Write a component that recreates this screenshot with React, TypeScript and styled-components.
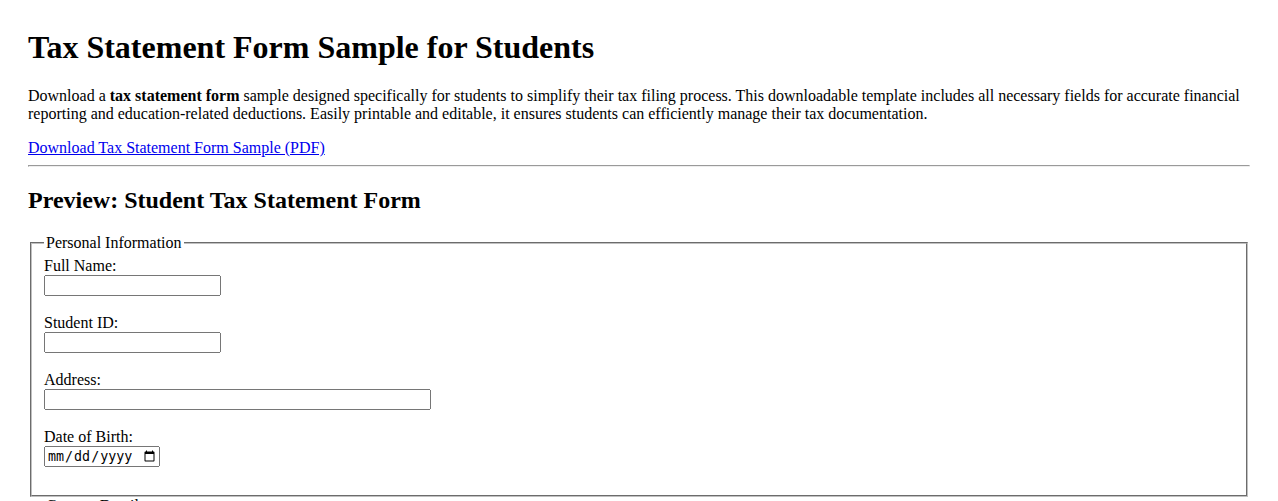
import React from "react";
import styled, { createGlobalStyle } from "styled-components";

const GlobalStyle = createGlobalStyle`
  body {
    margin: 8px;
    font-family: "Liberation Serif", "Times New Roman", serif;
    color: #000;
    background: #fff;
  }
`;

export default function App() {
  return (
    <>
      <GlobalStyle />
      <Page>
        <Title>Tax Statement Form Sample for Students</Title>
        <Intro>
          Download a <strong>tax statement form</strong> sample designed
          specifically for students to simplify their tax filing process. This
          downloadable template includes all necessary fields for accurate
          financial reporting and education-related deductions. Easily printable
          and editable, it ensures students can efficiently manage their tax
          documentation.
        </Intro>
        <DownloadLink href="#">Download Tax Statement Form Sample (PDF)</DownloadLink>
        <Divider />

        <SectionTitle>Preview: Student Tax Statement Form</SectionTitle>
        <form>
          <Group>
            <Legend>Personal Information</Legend>
            <FieldLabel htmlFor="fullName">Full Name:</FieldLabel>
            <br />
            <TextInput type="text" id="fullName" $width={177} />
            <br />
            <br />
            <FieldLabel htmlFor="studentId">Student ID:</FieldLabel>
            <br />
            <TextInput type="text" id="studentId" $width={177} />
            <br />
            <br />
            <FieldLabel htmlFor="address">Address:</FieldLabel>
            <br />
            <TextInput type="text" id="address" $width={387} />
            <br />
            <br />
            <FieldLabel htmlFor="dob">Date of Birth:</FieldLabel>
            <br />
            <TextInput type="date" id="dob" $width={116} />
            <br />
            <br />
          </Group>

          <Group>
            <Legend>Contact Details</Legend>
            <FieldLabel htmlFor="email">Email:</FieldLabel>
            <br />
            <TextInput type="email" id="email" $width={177} />
            <br />
            <br />
            <FieldLabel htmlFor="phone">Phone Number:</FieldLabel>
            <br />
            <TextInput type="tel" id="phone" $width={177} />
            <br />
            <br />
          </Group>

          <Group>
            <Legend>Income Details</Legend>
            <FieldLabel htmlFor="income">Total Annual Income:</FieldLabel>
            <br />
            <TextInput type="number" id="income" $width={177} />
            <br />
            <br />
            <FieldLabel htmlFor="tuition">Tuition Fees Paid:</FieldLabel>
            <br />
            <TextInput type="number" id="tuition" $width={177} />
            <br />
            <br />
          </Group>
        </form>
      </Page>
    </>
  );
}

const Page = styled.div`
  padding: 0 20px;
`;

const Title = styled.h1`
  font-size: 32px;
  line-height: 35px;
  margin: 22.44px 0 21.44px;
`;

const Intro = styled.p`
  font-size: 16px;
  line-height: 18px;
  margin: 16px 0;
`;

const DownloadLink = styled.a`
  color: #0000ee;
  text-decoration: underline;
  line-height: 18px;
`;

const Divider = styled.hr`
  margin: 8px 0;
  border-style: inset;
  border-width: 1px;
  color: gray;
`;

const SectionTitle = styled.h2`
  font-size: 24px;
  margin: 19.92px 0;
`;

const Group = styled.fieldset`
  margin: 0 2px;
  padding: 0.35em 0.75em 0.625em;
  border: 2px groove #c0c0c0;
`;

const Legend = styled.legend`
  padding: 0 2px;
`;

const FieldLabel = styled.label`
  font-size: 16px;
`;

const TextInput = styled.input<{ $width: number }>`
  box-sizing: border-box;
  width: ${(p) => p.$width}px;
  height: 21px;
`;
